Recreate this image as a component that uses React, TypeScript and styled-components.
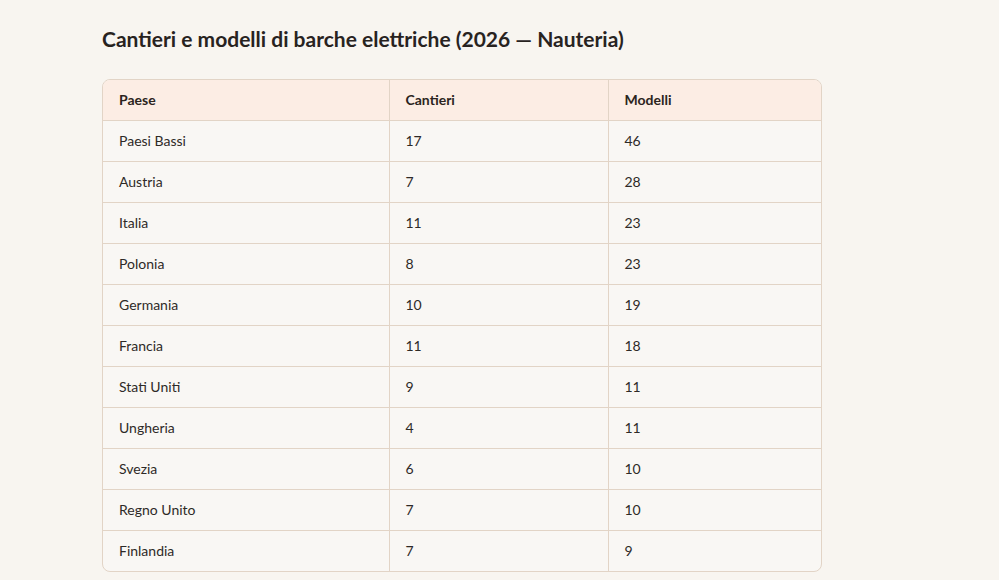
import React from "react";
import styled, { createGlobalStyle } from "styled-components";

const Global = createGlobalStyle`
  html, body { margin: 0; padding: 0; background: #f8f5f0; }
  body { font-family: Lato, "Open Sans", sans-serif; color: #2a2623; }
  *, *::before, *::after { box-sizing: border-box; }
`;

const Page = styled.div`
  padding: 25px 0 0 102px;
`;

const Title = styled.h2`
  margin: 0 0 26px 0;
  font-size: 21px;
  line-height: 28px;
  font-weight: 700;
  color: #28231f;
`;

const TableWrap = styled.div`
  width: 720px;
  border: 1px solid #e2d4c6;
  border-radius: 8px;
  overflow: hidden;
  background: #f9f7f4;
`;

const Table = styled.table`
  width: 100%;
  border-collapse: collapse;
  table-layout: fixed;
  font-size: 14px;
`;

const Th = styled.th<{ $w?: number }>`
  width: ${(p) => (p.$w ? `${p.$w}px` : "auto")};
  height: 40px;
  padding: 0 16px;
  text-align: left;
  font-weight: 700;
  color: #2b2420;
  background: #fcede4;
  border-bottom: 1px solid #e2d4c6;
  & + & { border-left: 1px solid #e2d4c6; }
`;

const Td = styled.td`
  height: 41px;
  padding: 0 16px;
  color: #2e2a27;
  & + & { border-left: 1px solid #e2d4c6; }
`;

const Tr = styled.tr`
  & + & td { border-top: 1px solid #e2d4c6; }
`;

const rows: [string, number, number][] = [
  ["Paesi Bassi", 17, 46],
  ["Austria", 7, 28],
  ["Italia", 11, 23],
  ["Polonia", 8, 23],
  ["Germania", 10, 19],
  ["Francia", 11, 18],
  ["Stati Uniti", 9, 11],
  ["Ungheria", 4, 11],
  ["Svezia", 6, 10],
  ["Regno Unito", 7, 10],
  ["Finlandia", 7, 9],
];

export default function App() {
  return (
    <>
      <Global />
      <Page>
        <Title>Cantieri e modelli di barche elettriche (2026 — Nauteria)</Title>
        <TableWrap>
          <Table>
            <thead>
              <tr>
                <Th $w={286}>Paese</Th>
                <Th $w={219}>Cantieri</Th>
                <Th>Modelli</Th>
              </tr>
            </thead>
            <tbody>
              {rows.map(([p, c, m]) => (
                <Tr key={p}>
                  <Td>{p}</Td>
                  <Td>{c}</Td>
                  <Td>{m}</Td>
                </Tr>
              ))}
            </tbody>
          </Table>
        </TableWrap>
      </Page>
    </>
  );
}
